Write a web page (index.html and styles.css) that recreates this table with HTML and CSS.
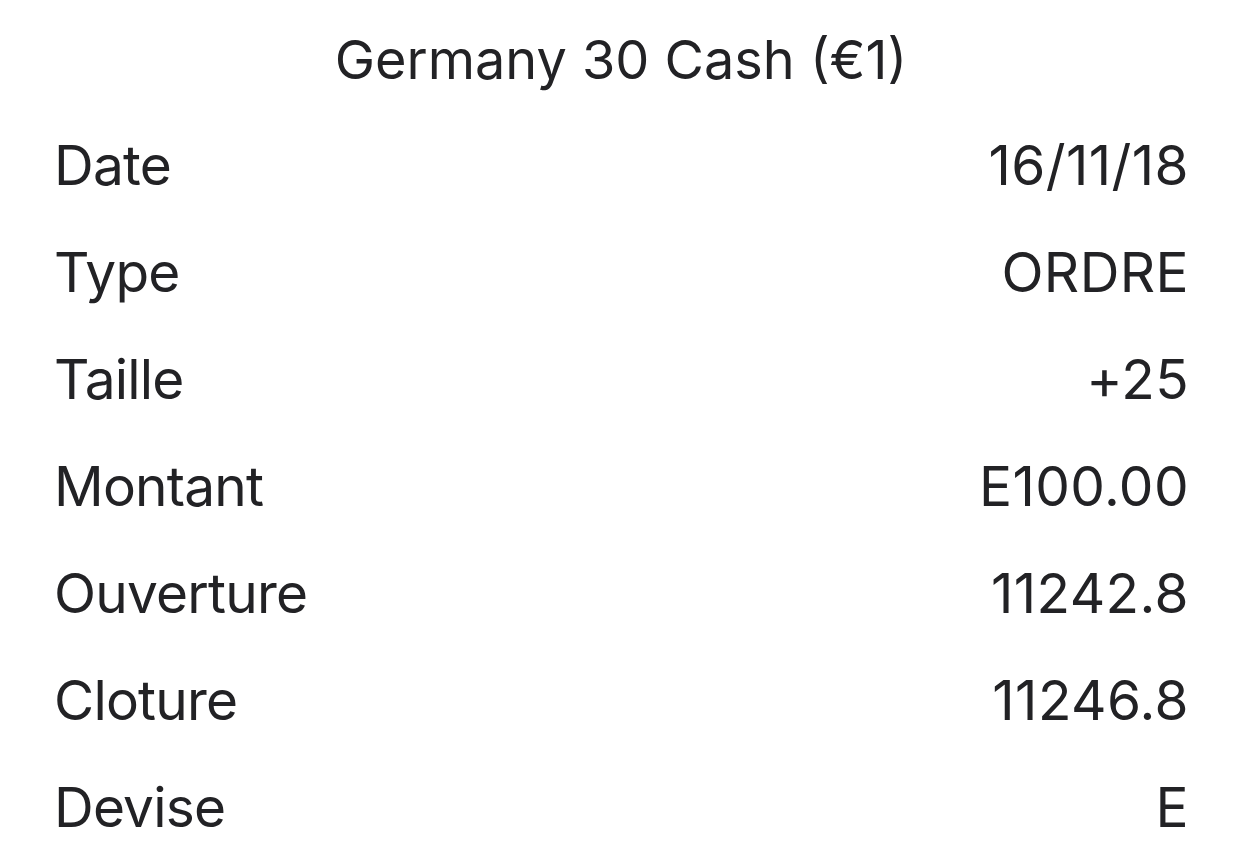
FILE: index.html
```html
<!DOCTYPE html>
<html>
<head>
<meta charset="utf-8">
<link rel="stylesheet" href="styles.css">
</head>
<body>
<div class="sheet">
  <h1 class="title">Germany 30 Cash (€1)</h1>
  <div class="rows">
    <div class="row"><span class="label">Date</span><span class="value">16/11/18</span></div>
    <div class="row"><span class="label">Type</span><span class="value">ORDRE</span></div>
    <div class="row"><span class="label">Taille</span><span class="value">+25</span></div>
    <div class="row"><span class="label">Montant</span><span class="value">E100.00</span></div>
    <div class="row"><span class="label">Ouverture</span><span class="value">11242.8</span></div>
    <div class="row"><span class="label">Cloture</span><span class="value">11246.8</span></div>
    <div class="row"><span class="label">Devise</span><span class="value">E</span></div>
  </div>
</div>
</body>
</html>
```
FILE: styles.css
```css
html, body {
  margin: 0;
  padding: 0;
  background: #ffffff;
}
.sheet {
  width: 1242px;
  height: 866px;
  overflow: hidden;
  font-family: Inter, "Noto Sans", sans-serif;
  color: #222225;
  padding-top: 7px;
  box-sizing: border-box;
}
.title {
  margin: 0;
  font-weight: 400;
  font-size: 54px;
  line-height: 105px;
  text-align: center;
}
.rows {
  display: flex;
  flex-direction: column;
}
.row {
  display: flex;
  justify-content: space-between;
  padding: 0 53px 0 54px;
  font-size: 55px;
  line-height: 107px;
}
.label {
  letter-spacing: -0.8px;
}
.value {
  letter-spacing: 0.4px;
}
```
